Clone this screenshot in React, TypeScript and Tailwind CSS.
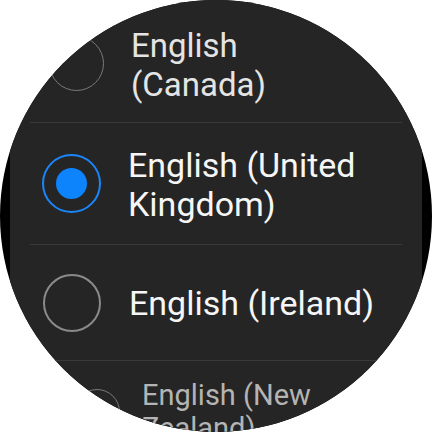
function Radio({ size, selected, dim }: { size: string; selected?: boolean; dim?: boolean }) {
  if (selected) {
    return (
      <div className={`${size} shrink-0 rounded-full border-2 border-[#1a86fa] flex items-center justify-center`}>
        <div className="w-[31px] h-[31px] rounded-full bg-[#0d84fb]" />
      </div>
    );
  }
  return (
    <div
      className={`${size} shrink-0 rounded-full ${dim ? "border-[1.5px] border-[#7a7a7a]" : "border-2 border-[#8a8a8a]"}`}
    />
  );
}

function Divider() {
  return <div className="h-px bg-[#3a3a3a] mx-[20px] shrink-0" />;
}

export default function App() {
  return (
    <div className="w-[432px] h-[432px] bg-white" style={{ fontFamily: "Roboto, 'Noto Sans', sans-serif" }}>
      <div className="w-full h-full rounded-full bg-black overflow-hidden">
        <div className="mx-[10px] h-full bg-[#252525] flex flex-col overflow-hidden">
          {/* English (Canada) - partly scrolled off */}
          <div className="mt-[4px] h-[118px] flex items-center pl-[39px] gap-[27px] shrink-0">
            <Radio size="w-[55px] h-[55px]" dim />
            <div className="text-[33px] leading-[39px] text-[#e4e4e4] pt-[3px]">
              English
              <br />
              (Canada)
            </div>
          </div>
          <Divider />

          {/* English (United Kingdom) - selected */}
          <div className="h-[121px] flex items-center pl-[32px] gap-[27px] shrink-0">
            <Radio size="w-[59px] h-[59px]" selected />
            <div className="text-[34px] leading-[39px] text-[#f6f6f6] pt-[2px]">
              English (United
              <br />
              Kingdom)
            </div>
          </div>
          <Divider />

          {/* English (Ireland) */}
          <div className="h-[115px] flex items-center pl-[33px] gap-[28px] shrink-0">
            <Radio size="w-[58px] h-[58px]" />
            <div className="text-[34px] leading-[39px] text-[#f6f6f6] pt-[1px]">English (Ireland)</div>
          </div>
          <Divider />

          {/* English (New Zealand) - scaled down at bottom */}
          <div className="pt-[18px] flex items-center pl-[64px] gap-[22px] shrink-0">
            <Radio size="w-[46px] h-[46px]" dim />
            <div className="text-[29px] leading-[33px] text-[#b4b4b4]">
              English (New
              <br />
              Zealand)
            </div>
          </div>
        </div>
      </div>
    </div>
  );
}
